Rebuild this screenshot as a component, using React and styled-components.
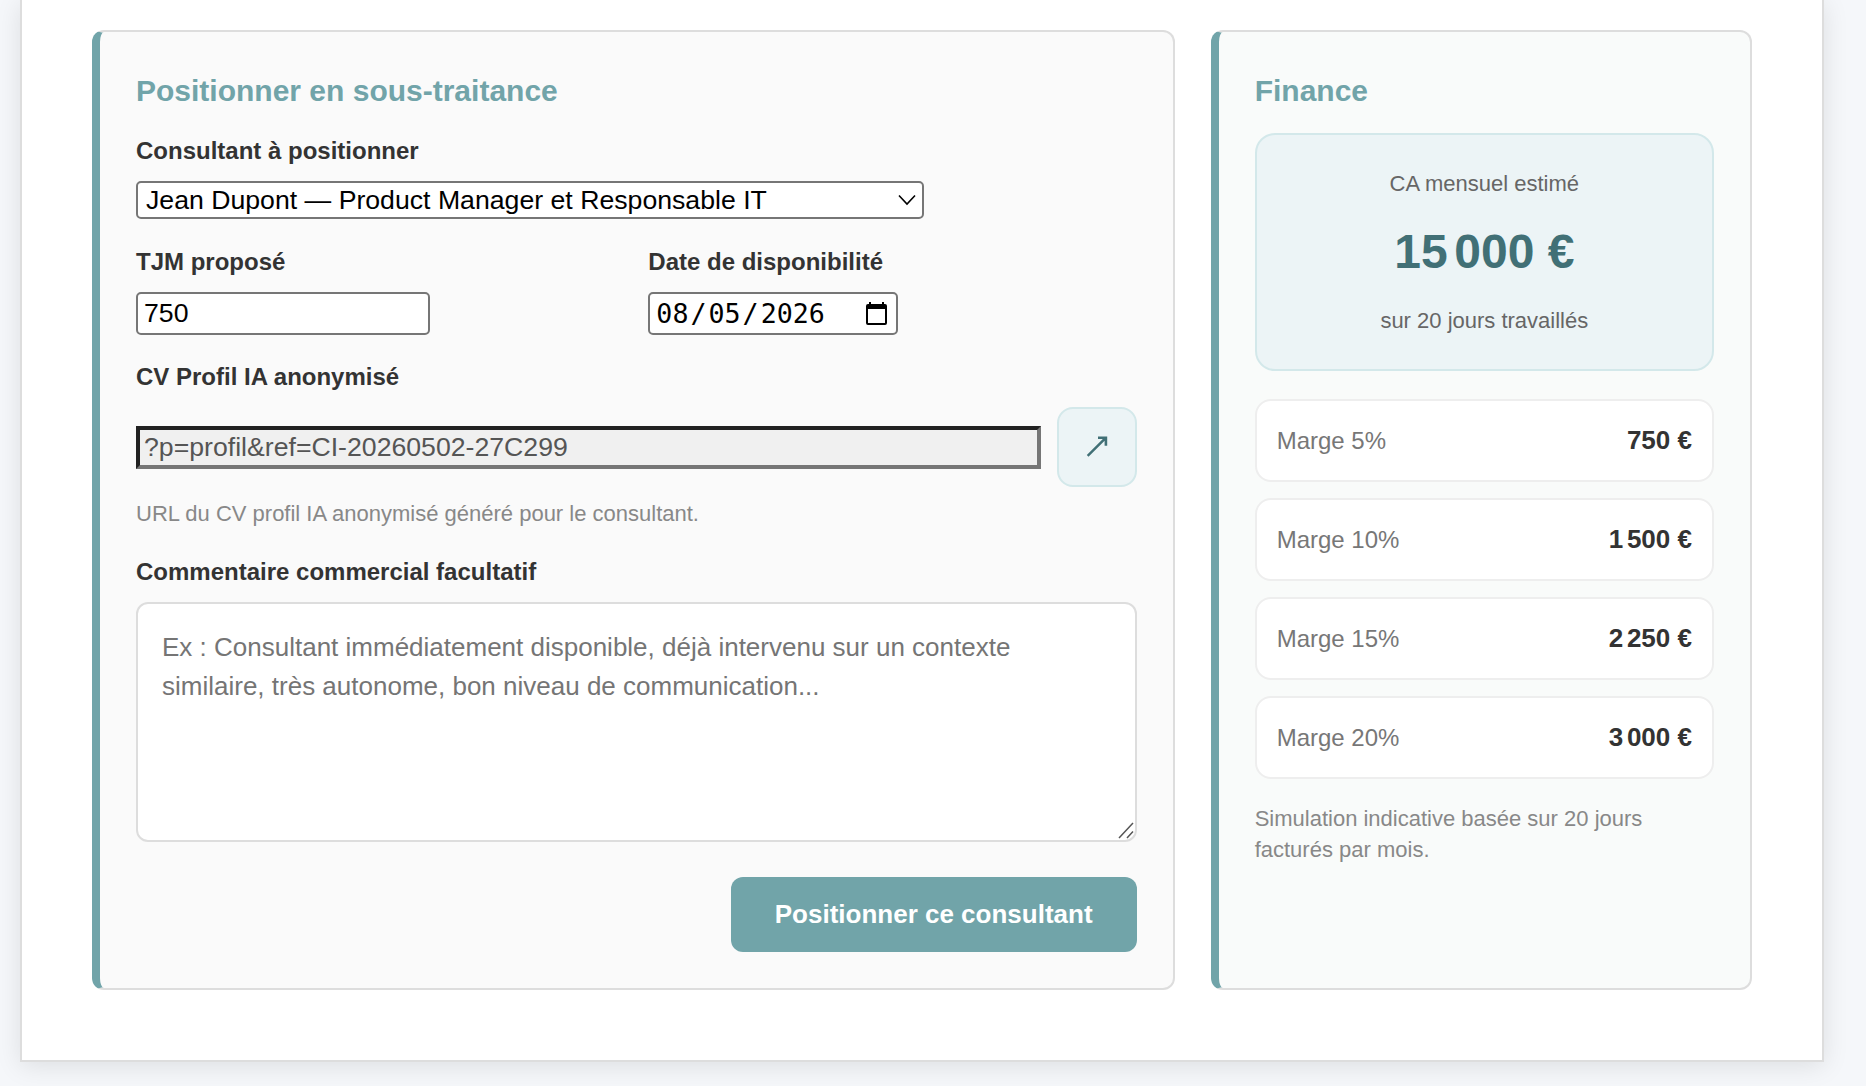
import { useState } from 'react';
import styled, { createGlobalStyle } from 'styled-components';

const teal = '#71a4a9';
const darkTeal = '#417076';
const arial = 'Arial, "Liberation Sans", sans-serif';

const GlobalStyle = createGlobalStyle`
  * {
    box-sizing: border-box;
  }
  body {
    margin: 0;
    height: 1086px;
    overflow: hidden;
    background: #f5f7fa;
    color: #333;
    font-family: ${arial};
  }
`;

const Sheet = styled.main`
  width: 1804px;
  height: 1062px;
  margin-left: 20px;
  padding: 30px 70px 70px;
  background: #fff;
  border: 2px solid #ddd;
  border-top: none;
  box-shadow: 0 4px 24px rgba(0, 0, 0, 0.1);
`;

const Columns = styled.div`
  display: grid;
  grid-template-columns: minmax(0, 2fr) minmax(0, 1fr);
  gap: 36px;
  height: 960px;
`;

const Card = styled.section`
  display: flex;
  flex-direction: column;
  padding: 36px;
  background: ${(props) => props.$bg};
  border: 2px solid #ddd;
  border-left: 8px solid ${teal};
  border-radius: 12px;
`;

const Title = styled.h3`
  margin: 0;
  height: 65px;
  padding-top: 5px;
  font-size: 30px;
  line-height: 36px;
  color: ${teal};
`;

const Label = styled.label`
  display: block;
  height: 48px;
  font-size: 24px;
  font-weight: bold;
  line-height: 36px;
`;

const SelectWrap = styled.div`
  display: grid;
  width: 788px;
  align-items: center;
  justify-items: end;
  margin-bottom: 25px;

  select,
  svg {
    grid-area: 1 / 1;
  }
  svg {
    margin-right: 8px;
    pointer-events: none;
  }
`;

const Select = styled.select`
  appearance: none;
  width: 100%;
  height: 38px;
  padding: 0 8px;
  border: 2px solid #767676;
  border-radius: 5px;
  background: #fff;
  color: #000;
  font-family: ${arial};
  font-size: 26.67px;
`;

const TwoCols = styled.div`
  display: grid;
  grid-template-columns: 1fr 1fr;
  gap: 24px;
  margin-bottom: 24px;
`;

const Input = styled.input`
  display: block;
  width: 294px;
  height: 43px;
  padding: 2px 6px;
  border: 2px solid #767676;
  border-radius: 5px;
  background: #fff;
  color: #000;
  font-family: ${arial};
  font-size: 26.67px;
`;

const DateBox = styled.div`
  display: flex;
  align-items: center;
  justify-content: space-between;
  width: 250px;
  height: 43px;
  padding: 0 9px 0 6px;
  border: 2px solid #767676;
  border-radius: 5px;
  background: #fff;
  color: #000;
  font-family: 'DejaVu Sans Mono', monospace;
  font-size: 26.67px;

  i {
    font-style: normal;
    padding: 0 2px;
  }
`;

const LinkRow = styled.div`
  display: flex;
  align-items: center;
  gap: 16px;
`;

const ReadonlyInput = styled(Input)`
  flex: 1;
  padding: 0 4px;
  border: 4px solid;
  border-color: #212121 #767676 #767676 #212121;
  border-radius: 0;
  background: #f0f0f0;
  color: #555;
`;

const OpenLink = styled.a`
  display: flex;
  align-items: center;
  justify-content: center;
  width: 80px;
  height: 80px;
  border: 2px solid #d3e8ea;
  border-radius: 16px;
  background: #ecf4f6;
  color: ${darkTeal};
`;

const Hint = styled.p`
  margin: ${(props) => props.$margin || 0};
  font-size: 22px;
  line-height: 31px;
  color: #888;
`;

const AreaWrap = styled.div`
  position: relative;
  height: 240px;

  svg {
    position: absolute;
    right: 3px;
    bottom: 3px;
    pointer-events: none;
  }
`;

const TextArea = styled.textarea`
  display: block;
  width: 100%;
  height: 100%;
  padding: 24px;
  resize: none;
  border: 2px solid #ddd;
  border-radius: 12px;
  background: #fff;
  font-family: ${arial};
  font-size: 26px;
  line-height: 39px;

  &::placeholder {
    color: #757575;
  }
`;

const Submit = styled.button`
  align-self: flex-end;
  width: 406px;
  height: 75px;
  margin-top: 35px;
  padding: 0;
  border: none;
  border-radius: 12px;
  background: ${teal};
  color: #fff;
  font-family: ${arial};
  font-size: 26px;
  font-weight: bold;
`;

const Revenue = styled.div`
  display: flex;
  flex-direction: column;
  align-items: center;
  height: 238px;
  padding-top: 33px;
  margin-bottom: 28px;
  border: 2px solid #d3e8ea;
  border-radius: 20px;
  background: #ecf4f6;
  color: #666;
  font-size: 22px;
  line-height: 31px;

  strong {
    margin: 15px 0;
    color: ${darkTeal};
    font-size: 48px;
    line-height: 76px;
  }
`;

const Margins = styled.div`
  display: flex;
  flex-direction: column;
  gap: 16px;
  margin-bottom: 24px;
`;

const MarginRow = styled.div`
  display: flex;
  align-items: center;
  justify-content: space-between;
  height: 83px;
  padding: 0 20px;
  border: 2px solid #eee;
  border-radius: 16px;
  background: #fff;
  font-size: 24px;
  color: #777;

  strong {
    font-size: 26px;
    color: #333;
  }
`;

// thousands separator, narrower than a regular space
const Thin = styled.span`
  display: inline-block;
  width: 0.14em;
`;

const Amount = ({ value }) => {
  const thousands = Math.floor(value / 1000);
  const rest = String(value % 1000);
  return (
    <strong>
      {thousands > 0 && <>{thousands}<Thin /></>}
      {thousands > 0 ? rest.padStart(3, '0') : rest} €
    </strong>
  );
};

const ChevronIcon = () => (
  <svg width="18" height="12" viewBox="0 0 18 12" fill="none" stroke="#000" strokeWidth="1.6">
    <path d="M1 1.5 9 10l8-8.5" />
  </svg>
);

const CalendarIcon = () => (
  <svg width="21" height="23" viewBox="0 0 21 23">
    <path
      fillRule="evenodd"
      d="M3 0h2v2h11V0h2v2h1a2 2 0 0 1 2 2v17a2 2 0 0 1-2 2H2a2 2 0 0 1-2-2V4a2 2 0 0 1 2-2h1zM2 7v14h17V7z"
    />
  </svg>
);

const ArrowIcon = () => (
  <svg width="22" height="22" viewBox="0 0 22 22" fill="currentColor">
    <path d="M12 0.500h9.200v9.200h-2.600V4.800L2.500 20.800.800 19.100 16.800 3.100H12z" />
  </svg>
);

const ResizeGrip = () => (
  <svg width="16" height="17" viewBox="0 0 16 17" stroke="#555" strokeWidth="1.5">
    <path d="M1 16 15 1M9 16l6-6.5" />
  </svg>
);

const margins = [5, 10, 15, 20];

function App() {
  const [tjm, setTjm] = useState('750');
  const revenue = Number(tjm) * 20;

  return (
    <>
      <GlobalStyle />
      <Sheet>
        <Columns>
          <Card $bg="#fafafa">
            <Title>Positionner en sous-traitance</Title>

            <Label>Consultant à positionner</Label>
            <SelectWrap>
              <Select>
                <option>Jean Dupont — Product Manager et Responsable IT</option>
              </Select>
              <ChevronIcon />
            </SelectWrap>

            <TwoCols>
              <div>
                <Label>TJM proposé</Label>
                <Input value={tjm} onChange={(e) => setTjm(e.target.value)} />
              </div>
              <div>
                <Label>Date de disponibilité</Label>
                <DateBox>
                  <span>08<i>/</i>05<i>/</i>2026</span>
                  <CalendarIcon />
                </DateBox>
              </div>
            </TwoCols>

            <Label>CV Profil IA anonymisé</Label>
            <LinkRow>
              <ReadonlyInput readOnly value="?p=profil&ref=CI-20260502-27C299" />
              <OpenLink>
                <ArrowIcon />
              </OpenLink>
            </LinkRow>
            <Hint $margin="11px 0 25px">URL du CV profil IA anonymisé généré pour le consultant.</Hint>

            <Label>Commentaire commercial facultatif</Label>
            <AreaWrap>
              <TextArea placeholder="Ex : Consultant immédiatement disponible, déjà intervenu sur un contexte similaire, très autonome, bon niveau de communication..." />
              <ResizeGrip />
            </AreaWrap>

            <Submit>Positionner ce consultant</Submit>
          </Card>

          <Card $bg="#f9fbfa">
            <Title>Finance</Title>
            <Revenue>
              <span>CA mensuel estimé</span>
              <Amount value={revenue} />
              <span>sur 20 jours travaillés</span>
            </Revenue>
            <Margins>
              {margins.map((rate) => (
                <MarginRow key={rate}>
                  <span>Marge {rate}%</span>
                  <Amount value={Math.round((revenue * rate) / 100)} />
                </MarginRow>
              ))}
            </Margins>
            <Hint>Simulation indicative basée sur 20 jours facturés par mois.</Hint>
          </Card>
        </Columns>
      </Sheet>
    </>
  );
}

export default App;
